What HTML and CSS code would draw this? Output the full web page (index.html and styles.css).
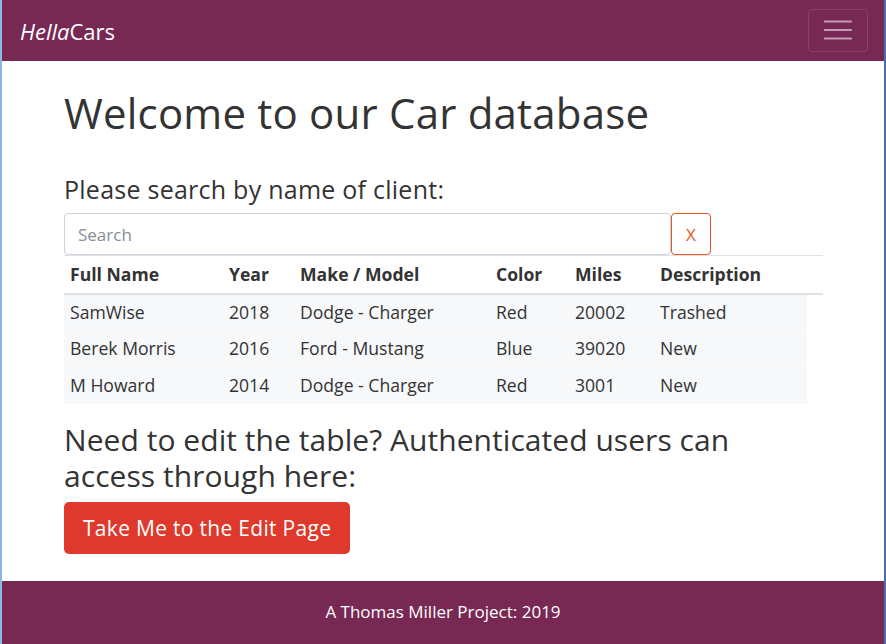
FILE: index.html
```html
<!DOCTYPE html>
<html lang="en">
<head>
<meta charset="utf-8">
<title>HellaCars</title>
<link rel="stylesheet" href="styles.css">
</head>
<body>
<div class="frame">
  <nav class="navbar">
    <a class="brand" href="#"><em>Hella</em>Cars</a>
    <button class="toggler" type="button" aria-label="Toggle navigation">
      <svg width="28" height="22" viewBox="0 0 28 22" aria-hidden="true">
        <path d="M0 2.5h27M0 11h27M0 19.5h27" stroke="rgba(255,255,255,0.55)" stroke-width="2.2" stroke-linecap="round" fill="none"/>
      </svg>
    </button>
  </nav>
  <main class="content">
    <h1 class="title">Welcome to our Car database</h1>
    <h4 class="subtitle">Please search by name of client:</h4>
    <div class="search">
      <input class="search-input" type="text" placeholder="Search">
      <button class="search-clear" type="button">X</button>
    </div>
    <table class="cars">
      <colgroup>
        <col class="c-name"><col class="c-year"><col class="c-make"><col class="c-color"><col class="c-miles"><col class="c-desc"><col class="c-extra">
      </colgroup>
      <thead>
        <tr><th>Full Name</th><th>Year</th><th>Make / Model</th><th>Color</th><th>Miles</th><th>Description</th><th></th></tr>
      </thead>
      <tbody>
        <tr><td>SamWise</td><td>2018</td><td>Dodge - Charger</td><td>Red</td><td>20002</td><td>Trashed</td></tr>
        <tr><td>Berek Morris</td><td>2016</td><td>Ford - Mustang</td><td>Blue</td><td>39020</td><td>New</td></tr>
        <tr><td>M Howard</td><td>2014</td><td>Dodge - Charger</td><td>Red</td><td>3001</td><td>New</td></tr>
      </tbody>
    </table>
    <h3 class="edit-note">Need to edit the table? Authenticated users can access through here:</h3>
    <a class="btn-edit" href="#">Take Me to the Edit Page</a>
  </main>
  <footer class="footer">A Thomas Miller Project: 2019</footer>
</div>
</body>
</html>
```
FILE: styles.css
```css
* { box-sizing: border-box; }
html, body { margin: 0; padding: 0; background: #ffffff; }
body {
  font-family: "Open Sans", "Noto Sans", sans-serif;
  color: #333333;
  font-size: 17.6px;
}
.frame {
  width: 886px;
  height: 644px;
  border-left: 2px solid #8bb8e0;
  border-right: 2px solid #4a6fae;
  display: flex;
  flex-direction: column;
  overflow: hidden;
}
.navbar {
  height: 61px;
  flex: none;
  background: #772953;
  display: flex;
  align-items: center;
  justify-content: space-between;
  padding: 0 16px 0 18px;
}
.brand {
  color: #ffffff;
  text-decoration: none;
  font-size: 22px;
  letter-spacing: 0;
}
.brand em { font-style: italic; }
.toggler {
  width: 60px;
  height: 43px;
  margin-top: -1px;
  background: transparent;
  border: 1px solid rgba(255,255,255,0.12);
  border-radius: 4px;
  display: flex;
  align-items: center;
  justify-content: center;
  padding: 0;
}
.content {
  flex: 1;
  padding: 0 0 0 62px;
}
.title {
  margin: 26px 0 0;
  font-size: 42px;
  font-weight: 400;
  line-height: 52px;
  letter-spacing: 0.2px;
}
.subtitle {
  margin: 34px 0 0;
  font-size: 25px;
  font-weight: 400;
  line-height: 32px;
  letter-spacing: 0.25px;
}
.search {
  display: flex;
  margin-top: 8px;
  width: 647px;
}
.search-input {
  width: 607px;
  height: 42px;
  border: 1px solid #ced4da;
  border-radius: 4px;
  padding: 0 13px;
  font-family: inherit;
  font-size: 17px;
  color: #333;
  outline: none;
}
.search-input::placeholder { color: #868e96; }
.search-clear {
  width: 40px;
  height: 42px;
  border: 1px solid #e95420;
  border-radius: 4px;
  background: #ffffff;
  color: #e95420;
  font-family: inherit;
  font-size: 17px;
  padding: 0;
}
.cars {
  width: 759px;
  border-collapse: collapse;
  table-layout: fixed;
  margin-top: 0;
}
.c-name { width: 159px; }
.c-year { width: 71px; }
.c-make { width: 196px; }
.c-color { width: 79px; }
.c-miles { width: 85px; }
.c-desc { width: 153px; }
.c-extra { width: 16px; }
.cars th {
  text-align: left;
  font-weight: 700;
  padding: 0 6px;
  height: 38px;
  border-top: 1px solid #dee2e6;
  border-bottom: 2px solid #dee2e6;
  white-space: nowrap;
}
.cars td {
  padding: 0 6px;
  height: 37px;
  background: #f7f8fa;
  border-top: 1px solid #fcfcfd;
  white-space: nowrap;
}
.cars tbody tr:first-child td { border-top: 0; height: 36px; }
.edit-note {
  margin: 18px 0 0;
  width: 700px;
  font-size: 30px;
  font-weight: 400;
  line-height: 36px;
  letter-spacing: 0.05px;
}
.btn-edit {
  display: inline-flex;
  align-items: center;
  height: 52px;
  margin-top: 8px;
  padding: 0 19px;
  background: #df382c;
  color: #ffffff;
  text-decoration: none;
  border-radius: 5px;
  font-size: 21px;
  letter-spacing: 0.3px;
}
.footer {
  flex: none;
  height: 63px;
  margin-bottom: 0;
  background: #772953;
  color: #ffffff;
  display: flex;
  align-items: center;
  justify-content: center;
  padding-bottom: 2px;
  font-size: 17px;
}
```
